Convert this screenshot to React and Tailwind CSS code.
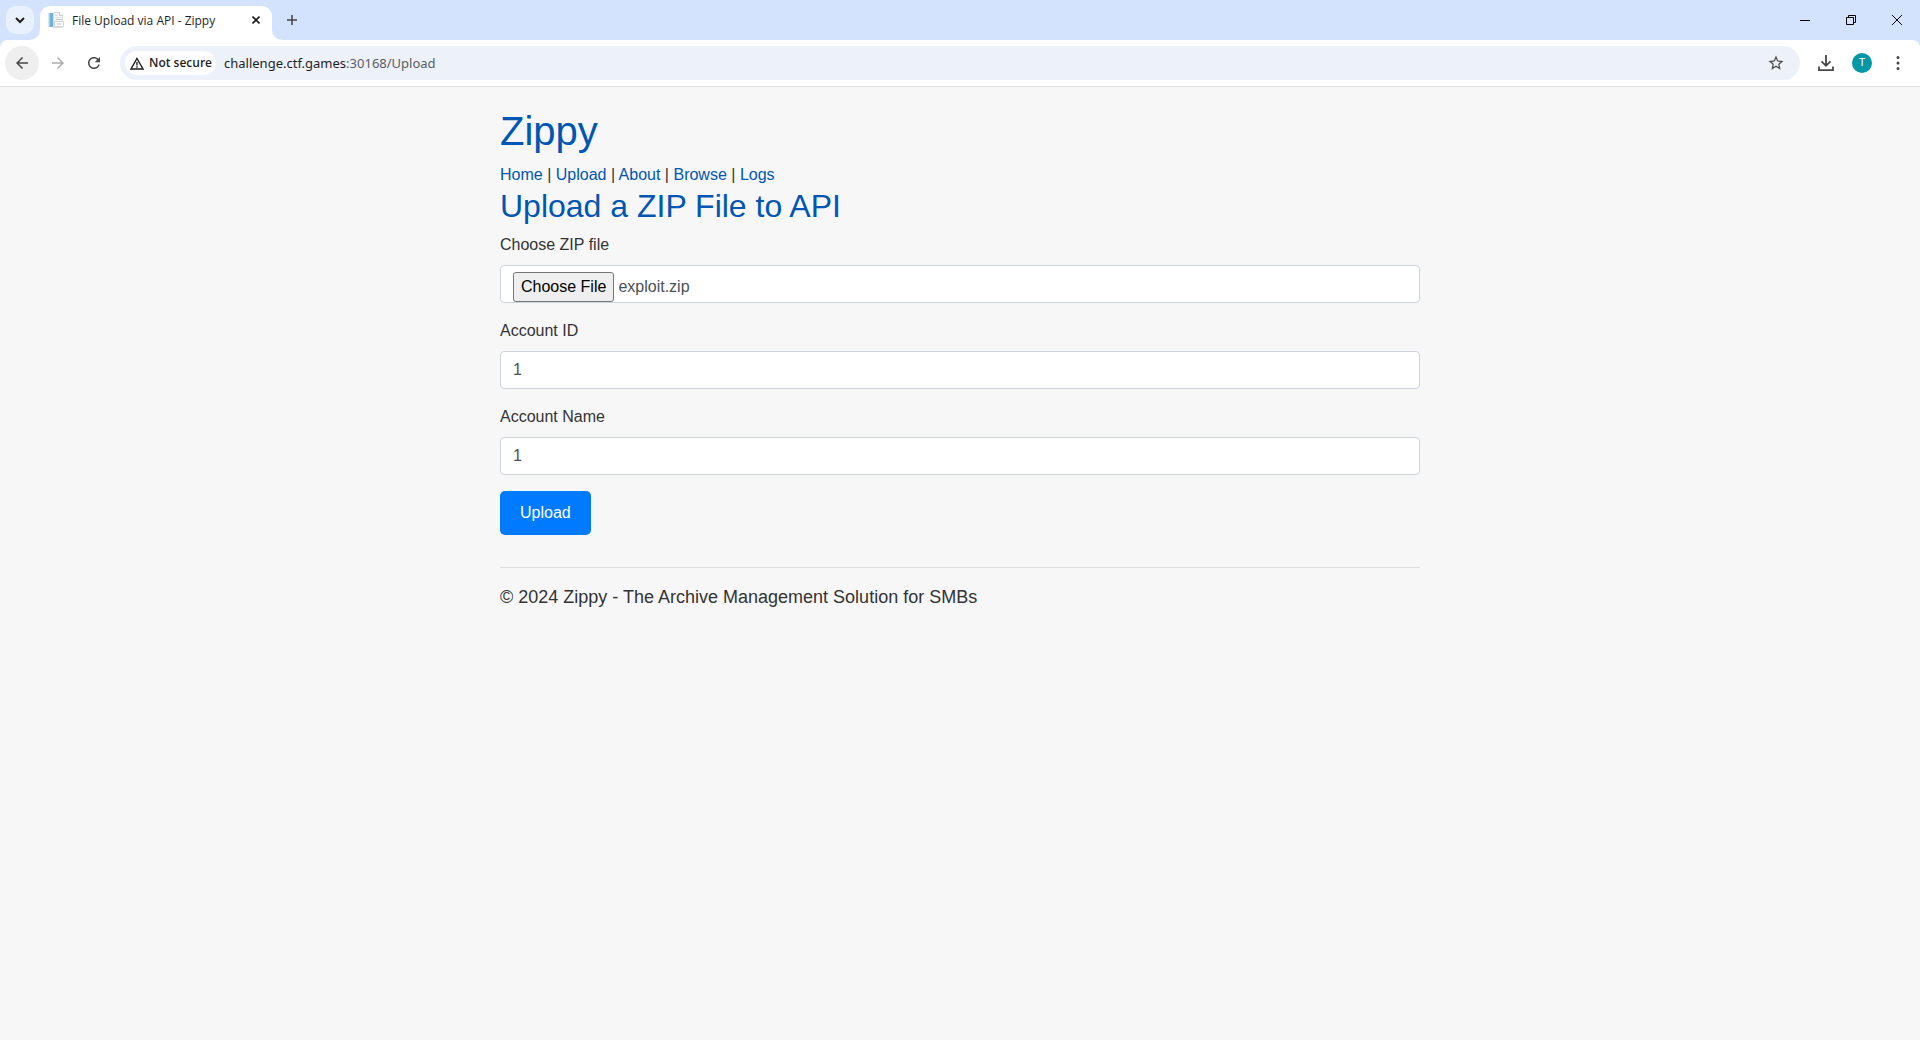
import React, { useRef, useState } from "react";

function ToolIcon({ d, className = "size-[18px]" }) {
  return (
    <svg viewBox="0 0 24 24" fill="currentColor" className={className} aria-hidden="true">
      <path d={d} />
    </svg>
  );
}

function PageIcon() {
  return (
    <svg viewBox="0 0 16 16" className="size-4 shrink-0" aria-hidden="true">
      <path d="M5.500 .5h6.500l2.500 2.500v12.500h-9z" fill="#f5f6f7" stroke="#dcdfe1" />
      <path d="M11.500 .5v3h3" fill="#fff" stroke="#c9cdd0" />
      <path d="M7 3.500h3M7 5.500h5" stroke="#dfe2e4" />
      <path d="M6.500 9.500h9v5h-9z" fill="#fff" stroke="#d3d6d8" />
      <path d="M8 7.500h6M8.500 12h5" stroke="#c3c8cc" />
      <path d="M0 1h1.500v14H0z" fill="#d6e6f2" />
      <path d="M1.500 1H5v14H1.500z" fill="#6fb1dc" />
    </svg>
  );
}

function TabCurve({ flip }) {
  return (
    <svg viewBox="0 0 10 10" className={flip ? "size-2.5 -scale-x-100" : "size-2.5"} aria-hidden="true">
      <path d="M10 0v10H0A10 10 0 0 0 10 0z" fill="#fff" />
    </svg>
  );
}

function TabStrip() {
  return (
    <div className="flex h-10 items-end bg-[#d3e3fd] pl-1.5">
      <button aria-label="Search tabs" className="mb-1.5 flex size-7 items-center justify-center rounded-[10px] bg-[#e9f1fe] text-[#1f1f1f]">
        <svg viewBox="0 0 10 10" className="size-2.5" fill="none" stroke="currentColor" strokeWidth="2" aria-hidden="true">
          <path d="M1 3l4 4 4-4" />
        </svg>
      </button>
      <div className="-ml-1 flex items-end">
        <TabCurve />
        <div className="flex h-[34px] w-[232px] items-center rounded-t-[10px] bg-white pr-2 pb-1.5 pl-2">
          <PageIcon />
          <span className="ml-2 flex-1 pt-0.5 font-['Open_Sans',sans-serif] text-xs whitespace-nowrap text-[#1f1f1f]">File Upload via API - Zippy</span>
          <button aria-label="Close tab" className="flex size-4 items-center justify-center text-[#1f1f1f]">
            <svg viewBox="0 0 8 8" className="size-2" stroke="currentColor" strokeWidth="1.600" aria-hidden="true">
              <path d="M.5.5l7 7M7.500.5l-7 7" />
            </svg>
          </button>
        </div>
        <TabCurve flip />
      </div>
      <button aria-label="New tab" className="mb-1.5 flex w-5 h-7 items-center justify-center text-[#474747]">
        <svg viewBox="0 0 10 10" className="size-2.5" stroke="currentColor" strokeWidth="1.600" aria-hidden="true">
          <path d="M5 0v10M0 5h10" />
        </svg>
      </button>
      <div className="ml-auto flex h-full text-black">
        <button aria-label="Minimize" className="flex w-[46px] items-center justify-center">
          <svg viewBox="0 0 10 10" className="size-2.5" stroke="currentColor" aria-hidden="true">
            <path d="M0 5.500h10" />
          </svg>
        </button>
        <button aria-label="Restore" className="flex w-[46px] items-center justify-center">
          <svg viewBox="0 0 10 10" className="size-2.5" fill="none" stroke="currentColor" aria-hidden="true">
            <path d="M.5 2.500h7v7h-7zM2.500 2.500v-2h7v7h-2" />
          </svg>
        </button>
        <button aria-label="Close" className="flex w-[46px] items-center justify-center">
          <svg viewBox="0 0 10 10" className="size-2.5" stroke="currentColor" aria-hidden="true">
            <path d="M0 0l10 10M10 0L0 10" />
          </svg>
        </button>
      </div>
    </div>
  );
}

function Toolbar() {
  return (
    <div className="bg-[#d3e3fd]">
      <div className="flex h-[47px] items-center rounded-t-lg border-b border-[#dedfe0] bg-white pl-[5px] text-[#474747]">
        <button aria-label="Back" className="flex size-[34px] items-center justify-center rounded-full bg-[#efefef]">
          <ToolIcon d="M20 11H7.830l5.590-5.590L12 4l-8 8 8 8 1.410-1.410L7.830 13H20v-2z" />
        </button>
        <button aria-label="Forward" className="ml-0.5 flex size-[34px] items-center justify-center text-[#acacac]">
          <ToolIcon d="M12 4l-1.410 1.410L16.170 11H4v2h12.170l-5.580 5.590L12 20l8-8z" />
        </button>
        <button aria-label="Reload" className="ml-0.5 flex size-[34px] items-center justify-center">
          <ToolIcon d="M17.650 6.350C16.200 4.900 14.210 4 12 4c-4.420 0-7.990 3.580-7.990 8s3.570 8 7.990 8c3.730 0 6.840-2.550 7.730-6h-2.080c-.820 2.330-3.040 4-5.650 4-3.310 0-6-2.690-6-6s2.690-6 6-6c1.660 0 3.140.690 4.220 1.780L13 11h7V4l-2.350 2.350z" />
        </button>
        <div className="ml-[9px] flex h-[34px] flex-1 items-center rounded-full bg-[#ecf1fa] pr-[15px] pl-[5px]">
          <button className="flex h-6 w-[91px] shrink-0 items-center gap-[5px] rounded-full bg-white pl-[5px] font-['Open_Sans',sans-serif] text-xs font-semibold whitespace-nowrap text-[#1f1f1f]">
            <svg viewBox="0 0 14 13" className="h-[13px] w-3.5 shrink-0" fill="none" stroke="currentColor" strokeWidth="1.400" aria-hidden="true">
              <path d="M7 1.500L13 12H1zM7 5v3.500M7 9.300v1.400" />
            </svg>
            Not secure
          </button>
          <div className="ml-2 flex-1 font-['Noto_Sans',sans-serif] text-[13px] leading-5 whitespace-nowrap text-[#1f1f1f]">
            challenge.ctf.games<span className="text-[#5a5d61]">:30168/Upload</span>
          </div>
          <button aria-label="Bookmark this page">
            <ToolIcon d="M22 9.240l-7.190-.620L12 2 9.190 8.630 2 9.240l5.460 4.730L5.820 21 12 17.270 18.180 21l-1.630-7.030L22 9.240zM12 15.400l-3.760 2.270 1-4.280-3.320-2.880 4.380-.380L12 6.100l1.710 4.040 4.380.380-3.320 2.880 1 4.280L12 15.400z" />
          </button>
        </div>
        <button aria-label="Downloads" className="ml-4 flex size-5 items-center justify-center">
          <svg viewBox="0 0 16 16" className="size-4" fill="none" stroke="currentColor" strokeWidth="1.800" aria-hidden="true">
            <path d="M8 0v10.500M3.500 6.300L8 10.800l4.500-4.500M1 11.500v3.600h14v-3.600" />
          </svg>
        </button>
        <button aria-label="Profile" className="ml-4 flex size-5 items-center justify-center rounded-full bg-[#0097a7] font-['Roboto',sans-serif] text-[11px] text-white">
          T
        </button>
        <button aria-label="Menu" className="mr-3 ml-4 flex w-5 items-center justify-center">
          <svg viewBox="0 0 4 14" className="h-3.5 w-1" fill="currentColor" aria-hidden="true">
            <circle cx="2" cy="1.600" r="1.500" />
            <circle cx="2" cy="7" r="1.500" />
            <circle cx="2" cy="12.400" r="1.500" />
          </svg>
        </button>
      </div>
    </div>
  );
}

function TextField({ id, label, value }) {
  return (
    <div className="mb-4">
      <label htmlFor={id} className="mb-2 block">{label}</label>
      <input id={id} type="text" defaultValue={value} className="block h-[38px] w-full rounded border border-[#ced4da] bg-white px-3 text-[#495057]" />
    </div>
  );
}

function FileField() {
  const picker = useRef(null);
  const [name, setName] = useState("exploit.zip");
  return (
    <div className="mb-4">
      <label htmlFor="zip-file" className="mb-2 block">Choose ZIP file</label>
      <div className="flex h-[38px] items-start gap-1 rounded border border-[#ced4da] bg-white px-3 pt-1.5 text-[#495057]">
        <input
          ref={picker}
          id="zip-file"
          type="file"
          accept=".zip"
          className="hidden"
          onChange={(e) => setName(e.target.files[0]?.name ?? "No file chosen")}
        />
        <button
          type="button"
          onClick={() => picker.current.click()}
          className="h-[30px] rounded-[3px] border border-[#767676] bg-[#efefef] px-[7px] text-black"
        >
          Choose File
        </button>
        <span className="leading-[30px]">{name}</span>
      </div>
    </div>
  );
}

const links = ["Home", "Upload", "About", "Browse", "Logs"];

export default function App() {
  return (
    <div className="flex min-h-screen flex-col bg-[#f7f7f7]">
      <header>
        <TabStrip />
        <Toolbar />
      </header>
      <main className="mx-auto w-full max-w-[960px] p-5 font-['Liberation_Sans',sans-serif] text-base text-[#333]">
        <h1 className="mb-2 text-[40px] leading-[48px] text-[#0056b3]">Zippy</h1>
        <nav>
          {links.map((link, i) => (
            <React.Fragment key={link}>
              {i > 0 && " | "}
              <a href={`#${link}`} className="text-[#0056b3]">{link}</a>
            </React.Fragment>
          ))}
        </nav>
        <h2 className="mb-2 text-[32px] leading-[38px] text-[#0056b3]">Upload a ZIP File to API</h2>
        <form onSubmit={(e) => e.preventDefault()}>
          <FileField />
          <TextField id="account-id" label="Account ID" value="1" />
          <TextField id="account-name" label="Account Name" value="1" />
          <button type="submit" className="block h-11 rounded-[5px] bg-[#007bff] px-5 text-white">Upload</button>
        </form>
        <footer className="mt-8 border-t border-[#dfdfdf] pt-4 text-lg leading-[27px]">
          © 2024 Zippy - The Archive Management Solution for SMBs
        </footer>
      </main>
    </div>
  );
}
